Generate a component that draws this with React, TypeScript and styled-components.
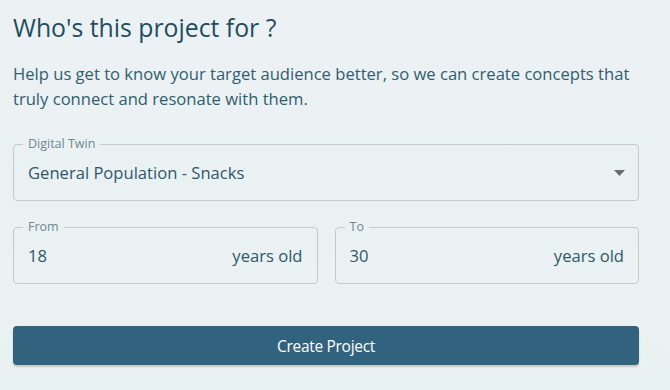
import styled, { createGlobalStyle } from 'styled-components';

const GlobalStyle = createGlobalStyle`
  html, body {
    margin: 0;
    padding: 0;
  }
  body {
    width: 670px;
    height: 390px;
    overflow: hidden;
    background: linear-gradient(180deg, #ecf1f4 0%, #e9f2f2 100%);
    font-family: 'Open Sans', 'Noto Sans', sans-serif;
  }
`;

const Page = styled.div`
  width: 626px;
  padding: 10px 31px 0 13px;
  display: flex;
  flex-direction: column;
`;

const Title = styled.h1`
  margin: 0;
  font-size: 24.8px;
  font-weight: 400;
  line-height: 34px;
  color: #1f4d5e;
`;

const Intro = styled.p`
  margin: 17px 0 0;
  font-size: 16.6px;
  line-height: 25px;
  color: #2f5e6e;
`;

const Outline = styled.fieldset`
  margin: 0;
  padding: 0 14px;
  height: 63px;
  box-sizing: border-box;
  border: 1px solid #c3cbcd;
  border-radius: 4px;
  display: flex;
  align-items: center;
  min-width: 0;
`;

const Legend = styled.legend`
  padding: 0 5px;
  margin-left: -5px;
  font-size: 12.5px;
  line-height: 12px;
  color: #6f8890;
`;

const Value = styled.span`
  flex: 1;
  font-size: 16.6px;
  color: #2f5868;
  margin-top: -5px;
`;

const Suffix = styled.span`
  font-size: 16.6px;
  color: #2f5868;
  margin-top: -5px;
`;

const Caret = styled.svg`
  width: 11px;
  height: 6px;
  margin-top: -5px;
  margin-right: -1px;
`;

const SelectField = styled.div`
  margin-top: 27px;
`;

const Row = styled.div`
  display: grid;
  grid-template-columns: 1fr 1fr;
  column-gap: 17px;
  margin-top: 20px;
`;

const Button = styled.button`
  margin-top: 42px;
  height: 39px;
  border: none;
  border-radius: 4px;
  background: #31637e;
  color: #ffffff;
  font-family: 'Open Sans', 'Noto Sans', sans-serif;
  font-size: 15.5px;
  letter-spacing: -0.3px;
  box-shadow: 0 2px 2px rgba(0, 0, 0, 0.18);
`;

function AgeField({ label, value }: { label: string; value: string }) {
  return (
    <Outline>
      <Legend>{label}</Legend>
      <Value>{value}</Value>
      <Suffix>years old</Suffix>
    </Outline>
  );
}

export default function App() {
  return (
    <>
      <GlobalStyle />
      <Page>
        <Title>Who's this project for ?</Title>
        <Intro>
          Help us get to know your target audience better, so we can create concepts that truly
          connect and resonate with them.
        </Intro>
        <SelectField>
          <Outline>
            <Legend>Digital Twin</Legend>
            <Value>General Population - Snacks</Value>
            <Caret viewBox="0 0 11 6">
              <path d="M0 0h11L5.5 6z" fill="#6b6b6b" />
            </Caret>
          </Outline>
        </SelectField>
        <Row>
          <AgeField label="From" value="18" />
          <AgeField label="To" value="30" />
        </Row>
        <Button>Create Project</Button>
      </Page>
    </>
  );
}
